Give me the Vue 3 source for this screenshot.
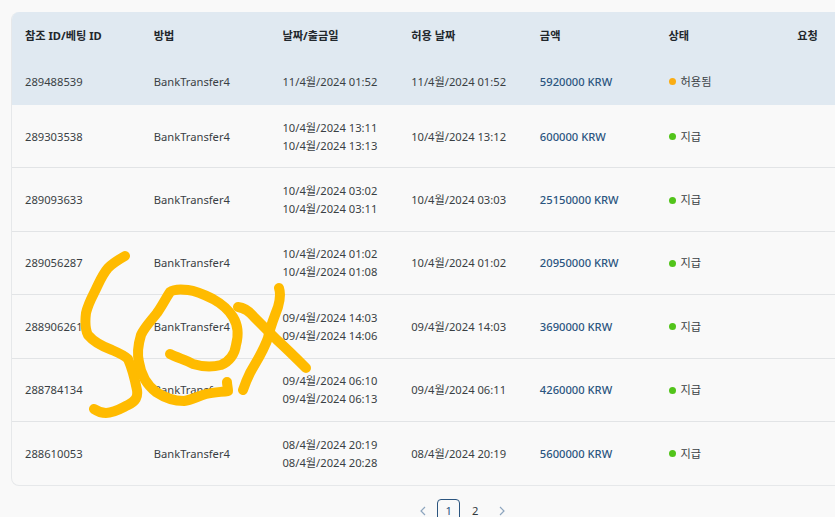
<script setup>
const columns = ['참조 ID/베팅 ID', '방법', '날짜/출금일', '허용 날짜', '금액', '상태', '요청']
const rows = [
  { id: '289488539', dates: ['11/4월/2024 01:52'], allowed: '11/4월/2024 01:52', amount: '5920000 KRW', status: '허용됨', pending: true },
  { id: '289303538', dates: ['10/4월/2024 13:11', '10/4월/2024 13:13'], allowed: '10/4월/2024 13:12', amount: '600000 KRW', status: '지급' },
  { id: '289093633', dates: ['10/4월/2024 03:02', '10/4월/2024 03:11'], allowed: '10/4월/2024 03:03', amount: '25150000 KRW', status: '지급' },
  { id: '289056287', dates: ['10/4월/2024 01:02', '10/4월/2024 01:08'], allowed: '10/4월/2024 01:02', amount: '20950000 KRW', status: '지급' },
  { id: '288906261', dates: ['09/4월/2024 14:03', '09/4월/2024 14:06'], allowed: '09/4월/2024 14:03', amount: '3690000 KRW', status: '지급' },
  { id: '288784134', dates: ['09/4월/2024 06:10', '09/4월/2024 06:13'], allowed: '09/4월/2024 06:11', amount: '4260000 KRW', status: '지급' },
  { id: '288610053', dates: ['08/4월/2024 20:19', '08/4월/2024 20:28'], allowed: '08/4월/2024 20:19', amount: '5600000 KRW', status: '지급' }
]
</script>

<template>
  <div class="page">
    <section class="card">
      <div class="row head">
        <div v-for="c in columns" :key="c" class="cell">{{ c }}</div>
      </div>
      <div v-for="r in rows" :key="r.id" class="row" :class="{ highlight: r.pending }">
        <div class="cell">{{ r.id }}</div>
        <div class="cell">BankTransfer4</div>
        <div class="cell dates">
          <span v-for="d in r.dates" :key="d">{{ d }}</span>
        </div>
        <div class="cell">{{ r.allowed }}</div>
        <div class="cell amount">{{ r.amount }}</div>
        <div class="cell status">
          <i class="dot" :class="{ orange: r.pending }"></i>{{ r.status }}
        </div>
        <div class="cell"></div>
      </div>
    </section>
    <nav class="pager">
      <svg class="arrow" width="23" height="23" viewBox="0 0 23 23"><path d="M14 8 L10 12 L14 16" /></svg>
      <span class="num current">1</span>
      <span class="num">2</span>
      <svg class="arrow" width="23" height="23" viewBox="0 0 23 23"><path d="M10 8 L14 12 L10 16" /></svg>
    </nav>
    <svg class="scribble" width="835" height="517" viewBox="0 0 835 517">
      <path d="M125 256 C118 260 112 264 108 268 C102 275 99 283 96 289 C92 297 88 304 86 313 C85 321 85 329 88 335 C93 341 101 346 112 350 C119 353 125 356 128 359 C132 368 135 380 137 390 C138 397 136 401 128 405 C120 409 114 413 106 413 C101 413 97 411 94 409" />
      <path d="M170 354 C178 358 186 360 193 364 C203 367 213 367 221 365 C229 362 235 354 236 345 C239 334 238 325 233 317 C228 309 222 304 213 299 C205 295 197 291 188 290 C180 289 174 289 170 292 C166 298 162 306 157 313 C150 322 144 328 141 335 C138 345 137 354 139 362 C141 375 147 385 156 392 C165 398 174 401 184 401 C192 400 198 396 206 394 C214 392 222 392 228 391 C228 388 227 385 227 382" />
      <path d="M279 288 C281 294 280 300 278 307 C274 318 270 327 268 338 C263 352 256 362 250 373 C247 379 245 384 243 390" />
      <path d="M238 307 C245 308 250 312 254 317 C262 325 269 332 277 340 C287 349 297 359 306 368" />
    </svg>
  </div>
</template>

<style scoped>
.page {
  position: relative;
  box-sizing: border-box;
  width: 835px;
  height: 517px;
  overflow: hidden;
  padding: 12px 0 0 11px;
  background: #f9f9f9;
  color: #3a3f44;
  font: 11.2px/18px "Noto Sans", "Noto Sans CJK KR", sans-serif;
}
.card {
  width: 903px;
  border: 1px solid #e6e8ea;
  border-top: 0;
  border-radius: 8px;
  box-sizing: border-box;
  overflow: hidden;
}
.row {
  display: grid;
  grid-template-columns: repeat(7, 1fr);
  align-items: center;
  height: 63.4px;
  border-bottom: 1px solid #e2e4e6;
  box-sizing: border-box;
  padding-top: 1px;
}
.row:last-child {
  border-bottom: 0;
  height: 62.6px;
}
.row.head {
  height: 46px;
  background: #e0e9f1;
  border-bottom: 0;
  font-weight: 700;
  color: #22272c;
}
.row.highlight {
  height: 47px;
  padding-top: 0;
  background: #e0e9f1;
  border-bottom: 0;
}
.cell {
  padding-left: 13px;
  white-space: nowrap;
}
.dates {
  display: flex;
  flex-direction: column;
}
.amount {
  color: #2b557f;
  font-weight: 500;
}
.status {
  display: flex;
  align-items: center;
}
.dot {
  width: 7px;
  height: 7px;
  border-radius: 50%;
  margin-right: 5px;
  background: #52c41a;
}
.dot.orange {
  background: #faad14;
}
.pager {
  display: flex;
  justify-content: center;
  gap: 3.5px;
  width: 902px;
  margin-top: 13px;
  color: #33383d;
}
.num {
  box-sizing: border-box;
  width: 23px;
  height: 23px;
  padding-top: 4px;
  border: 1px solid transparent;
  border-radius: 4px;
  text-align: center;
  line-height: 14px;
}
.num.current {
  border-color: #2b557f;
  color: #2b557f;
}
.arrow path {
  fill: none;
  stroke: #8ea6bf;
  stroke-width: 1.2;
}
.scribble {
  position: absolute;
  left: 0;
  top: 0;
}
.scribble path {
  fill: none;
  stroke: #ffbb00;
  stroke-width: 10;
  stroke-linecap: round;
  stroke-linejoin: round;
}
</style>
